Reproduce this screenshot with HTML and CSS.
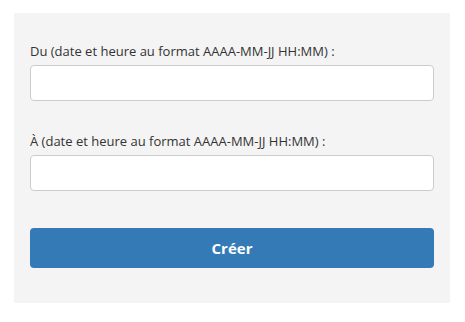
FILE: index.html
```html
<!DOCTYPE html>
<html lang="fr">
<head>
    <meta charset="UTF-8">
    <title>Créer</title>
    <link rel="stylesheet" href="styles.css">
</head>
<body>
    <form class="panel">
        <div class="field">
            <label for="du">Du (date et heure au format AAAA-MM-JJ HH:MM) :</label>
            <input type="text" id="du">
        </div>
        <div class="field">
            <label for="au">À (date et heure au format AAAA-MM-JJ HH:MM) :</label>
            <input type="text" id="au">
        </div>
        <button type="button">Créer</button>
    </form>
</body>
</html>
```

FILE: styles.css
```css
body {
    margin: 0;
    padding: 13px 15px 19px 14px;
    background-color: #fff;
    font-family: "Open Sans", sans-serif;
    font-size: 13px;
    color: #333;
}
.panel {
    background-color: #f4f4f4;
    padding: 29px 16px 35px;
}
.field {
    margin-bottom: 31px;
}
label {
    display: block;
    line-height: 18px;
    margin-bottom: 5px;
}
input {
    display: block;
    box-sizing: border-box;
    width: 100%;
    height: 36px;
    padding: 6px 12px;
    border: 1px solid #ccc;
    border-radius: 4px;
    background-color: #fff;
    font-family: inherit;
    font-size: 13px;
}
button {
    display: block;
    width: 100%;
    height: 40px;
    margin-top: 37px;
    background-color: #337ab7;
    color: #fff;
    border: none;
    border-radius: 4px;
    font-family: inherit;
    font-size: 15px;
    font-weight: bold;
    cursor: pointer;
}
```
